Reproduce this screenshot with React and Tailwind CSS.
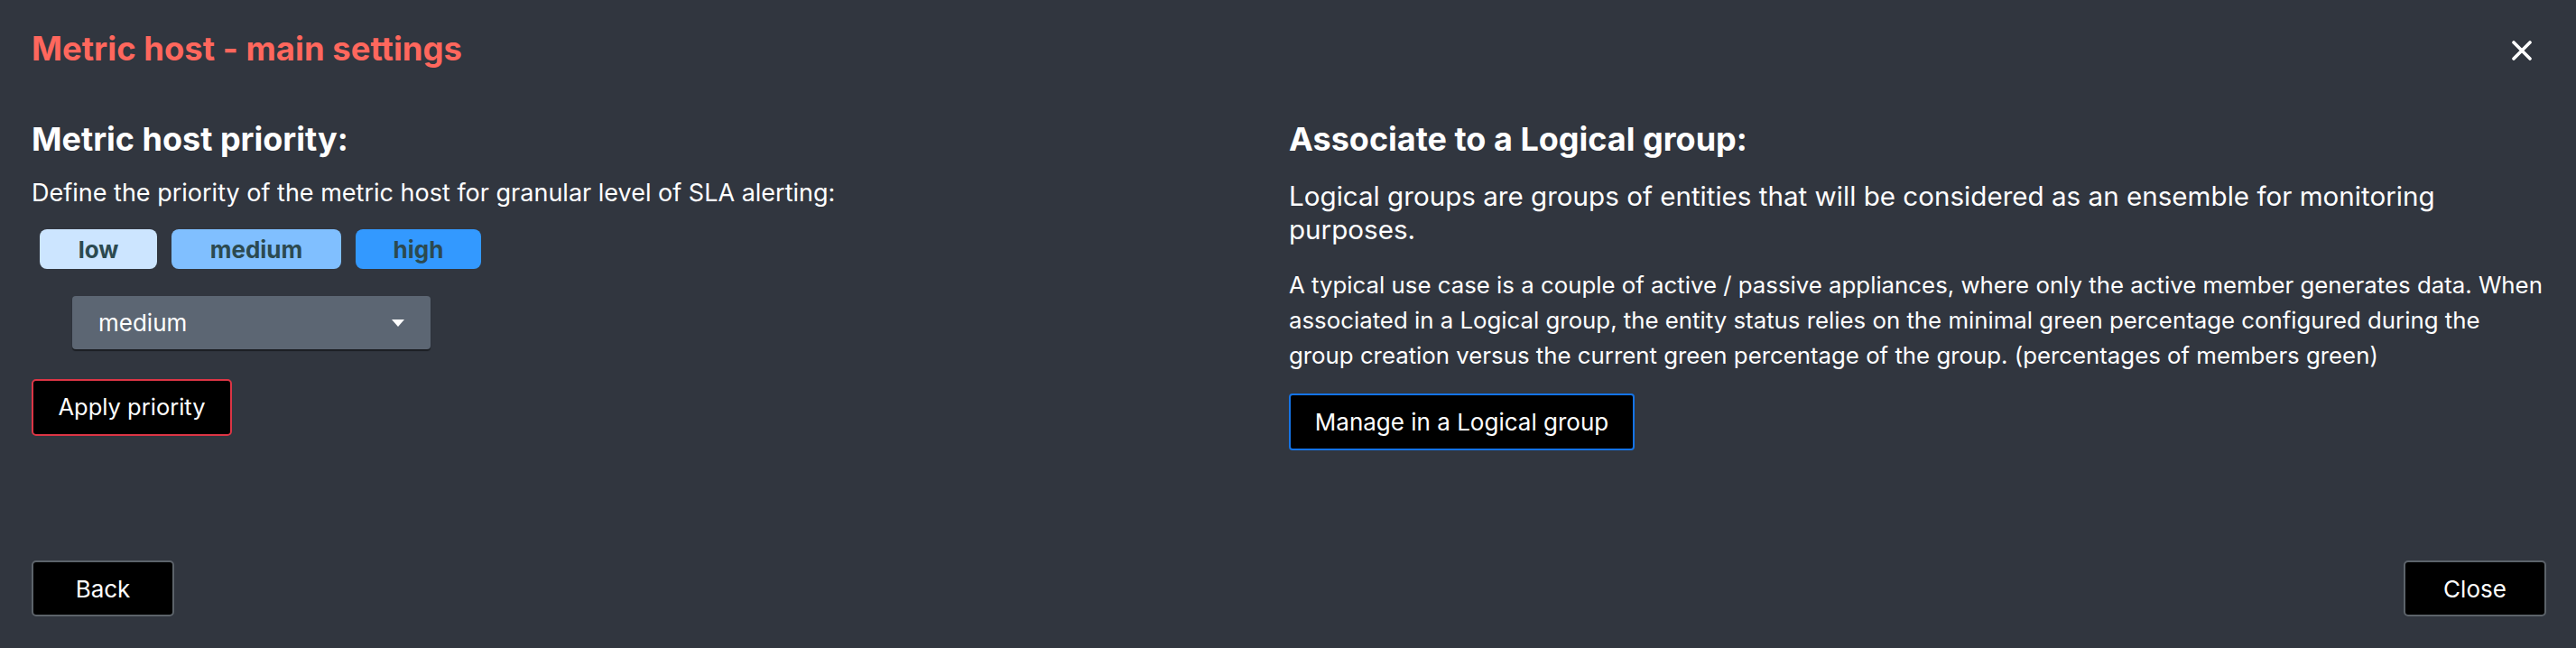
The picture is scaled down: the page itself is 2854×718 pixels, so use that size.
import React, { useState } from "react";

const priorities = [
  { label: "low", cls: "w-[130px] bg-[#cce5ff]" },
  { label: "medium", cls: "w-[188px] bg-[#80bfff]" },
  { label: "high", cls: "w-[139px] bg-[#3399ff]" },
];

const CloseIcon = () => (
  <svg width="22" height="22" viewBox="0 0 22 22" fill="none">
    <path d="M2 2 L20 20 M20 2 L2 20" stroke="white" strokeWidth="3.6" strokeLinecap="round" />
  </svg>
);

const Caret = () => (
  <svg width="14" height="8" viewBox="0 0 14 8">
    <path d="M0 0 H14 L7 8 Z" fill="white" />
  </svg>
);

export default function App() {
  const [priority, setPriority] = useState("medium");

  return (
    <div className="w-full h-[718px] bg-[#31363f] text-white flex flex-col pl-[35px] pr-[33px] font-['Inter','Noto_Sans',sans-serif]">
      {/* header */}
      <div className="mt-[32px] h-[44px] flex items-center justify-between">
        <h1 className="text-[36.5px] leading-[44px] font-bold text-[#ff675d]">Metric host - main settings</h1>
        <button className="w-[54px] h-[44px] pt-[4px] flex items-center justify-center">
          <CloseIcon />
        </button>
      </div>

      <div className="grid grid-cols-2 mt-[56px]">
        {/* left: priority */}
        <div className="flex flex-col items-start">
          <h2 className="text-[36px] leading-[44px] font-bold">Metric host priority:</h2>
          <p className="mt-[21px] text-[27px] leading-[34px]">
            Define the priority of the metric host for granular level of SLA alerting:
          </p>
          <div className="mt-[23px] ml-[9px] flex gap-[16px]">
            {priorities.map((p) => (
              <button
                key={p.label}
                onClick={() => setPriority(p.label)}
                className={`${p.cls} h-[44px] rounded-[8px] text-[26px] font-bold text-[#2c4a50] flex items-center justify-center`}
              >
                {p.label}
              </button>
            ))}
          </div>
          <div className="mt-[30px] ml-[45px] w-[397px] h-[59px] bg-[#5c6673] rounded-[4px] shadow-[0_2px_1px_rgba(0,0,0,0.45)] flex items-center justify-between pl-[29px] pr-[29px]">
            <span className="text-[26px]">{priority}</span>
            <Caret />
          </div>
          <button className="mt-[33px] w-[222px] h-[63px] bg-black border-2 border-[#dc3545] rounded-[5px] text-[25.5px]">
            Apply priority
          </button>
        </div>

        {/* right: logical group */}
        <div className="flex flex-col items-start">
          <h2 className="text-[36px] leading-[44px] font-bold">Associate to a Logical group:</h2>
          <p className="mt-[23px] text-[29.6px] leading-[37px]">
            Logical groups are groups of entities that will be considered as an ensemble for monitoring
            <br />
            purposes.
          </p>
          <p className="mt-[23px] text-[25.8px] leading-[39px] whitespace-nowrap">
            A typical use case is a couple of active / passive appliances, where only the active member generates data. When
            <br />
            associated in a Logical group, the entity status relies on the minimal green percentage configured during the
            <br />
            group creation versus the current green percentage of the group. (percentages of members green)
          </p>
          <button className="mt-[23px] w-[383px] h-[63px] bg-black border-2 border-[#1473e6] rounded-[4px] text-[26px]">
            Manage in a Logical group
          </button>
        </div>
      </div>

      {/* footer */}
      <div className="mt-auto mb-[35px] flex items-center justify-between">
        <button className="w-[158px] h-[62px] bg-black border-2 border-[#5c636a] rounded-[5px] text-[26px]">Back</button>
        <button className="w-[158px] h-[62px] bg-black border-2 border-[#5c636a] rounded-[5px] text-[26px]">Close</button>
      </div>
    </div>
  );
}
